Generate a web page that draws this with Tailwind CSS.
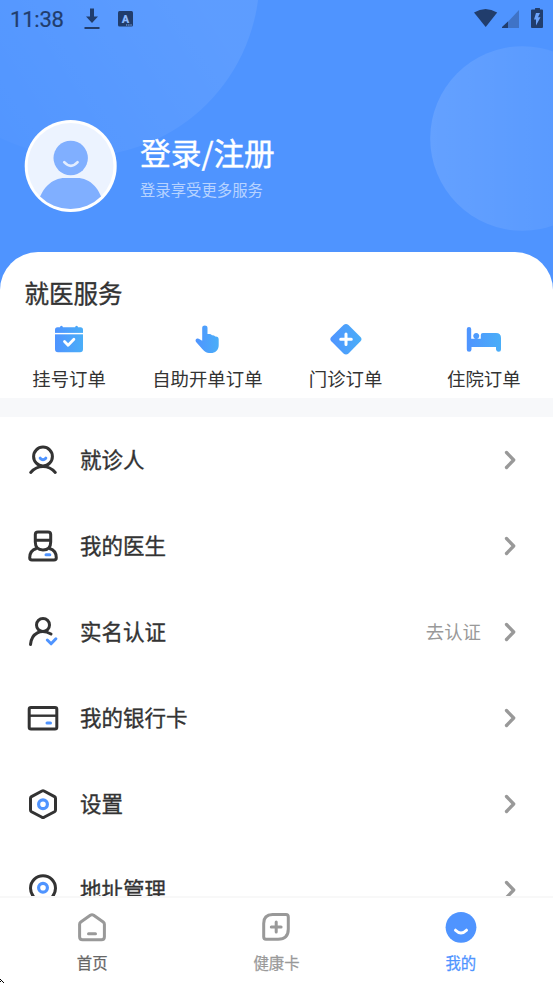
<!DOCTYPE html>
<html lang="zh-CN">
<head>
<meta charset="utf-8">
<title>我的</title>
<script src="https://cdn.jsdelivr.net/npm/@tailwindcss/browser@4"></script>
</head>
<body class="bg-white">
<div class="relative flex h-[984px] w-[553px] flex-col overflow-hidden bg-white font-['Noto_Sans_CJK_SC',sans-serif] text-[#333]">
  <!-- decorative header background -->
  <svg class="absolute left-0 top-0" width="553" height="300" viewBox="0 0 553 300">
    <defs>
      <linearGradient id="c1" gradientUnits="userSpaceOnUse" x1="10" y1="150" x2="210" y2="20"><stop offset="0" stop-color="#fff" stop-opacity=".02"/><stop offset="1" stop-color="#fff" stop-opacity=".08"/></linearGradient>
      <linearGradient id="c2"><stop offset="0" stop-color="#fff" stop-opacity=".12"/><stop offset="1" stop-color="#fff" stop-opacity=".03"/></linearGradient>
      <linearGradient id="g"><stop offset="0" stop-color="#4f94ff"/><stop offset="1" stop-color="#4aaef8"/></linearGradient>
    </defs>
    <rect width="553" height="300" fill="#4f94ff"/>
    <circle cx="80" cy="-23" r="179.5" fill="url(#c1)"/>
    <circle cx="522.500" cy="138.500" r="92.300" fill="url(#c2)"/>
  </svg>

  <header class="relative flex h-[252px] shrink-0 flex-col">
    <div class="flex h-[38px] items-center justify-between pl-[10px] pr-[9px] text-[#213d6c]">
      <div class="flex items-center">
        <span class="w-[74px] pt-[2px] font-[Roboto] text-[22px] leading-[36px] tracking-[-.2px] [-webkit-text-stroke:.2px]">11:38</span>
        <svg width="16" height="22" viewBox="0 0 16 22" fill="currentColor"><path d="M6 .5h4v8h4l-6 6.500L2 8.500h4zM.5 19h15v2H.5z"/></svg>
        <svg class="ml-[18px]" width="15" height="16" viewBox="0 0 15 16"><rect width="15" height="15.500" rx="1.500" fill="currentColor"/><text x="7.500" y="11.500" text-anchor="middle" font-family="Roboto" font-weight="900" font-size="11" fill="#8dbaff">A</text><path d="M8 14h1.300M10.200 14h1.300M12.400 14h1.300" stroke="#8dbaff" stroke-width="1"/></svg>
      </div>
      <svg class="-mt-[2px]" width="70" height="21" viewBox="0 0 70 21" fill="currentColor"><path d="M0 4.500Q11.500-2.500 23.200 4.500L11.700 19z"/><path d="M45 2V20H28z" fill="#3f73c7"/><path d="M34 13.500V20h-6v-1z"/><path d="M61 1.500V.5q0-.5.5-.5h4q.5 0 .5.500v1h2q1 0 1 1V19q0 1-1 1h-10q-1 0-1-1V2.500q0-1 1-1z"/><path d="M62 5h4l-2 4.200h2.500L62 17.500v-6h-2z" fill="#6ba3fb"/></svg>
    </div>
    <div class="flex pl-[24px] pt-[82px]">
      <svg width="93" height="92" viewBox="0 0 93 92">
        <defs><clipPath id="av"><circle cx="46.500" cy="46" r="43"/></clipPath></defs>
        <circle cx="46.700" cy="46" r="46" fill="#fff"/>
        <circle cx="46.500" cy="46" r="43" fill="#ecf3ff"/>
        <g clip-path="url(#av)" fill="#80afff"><circle cx="46.700" cy="38" r="17.200"/><path d="M12 94C14 70 27 58 41 58h12c14 0 26 12 28 36z"/></g>
        <path d="M40.200 42.200q6.700 7.400 13.400 0" fill="none" stroke="#e3edff" stroke-width="2.600" stroke-linecap="round"/>
      </svg>
      <div class="pl-[23px] pt-[10px] text-white">
        <div class="text-[30.7px] leading-[44px] [-webkit-text-stroke:.4px]">登录/注册</div>
        <div class="mt-[4px] text-[15.36px] leading-[22px] text-white/60">登录享受更多服务</div>
      </div>
    </div>
  </header>

  <section class="relative h-[146px] shrink-0 rounded-t-[38px] bg-white pt-[23px]">
    <h2 class="pl-[24.500px] text-[24.5px] leading-[36px] [-webkit-text-stroke:.35px]">就医服务</h2>
    <div class="grid grid-cols-4 pt-[10px] text-[18.4px] leading-[26px]">
      <div class="flex flex-col items-center whitespace-nowrap"><svg class="mb-[8px]" width="36" height="36" viewBox="0 0 36 36"><g transform="translate(0 -.3)" fill="url(#g)"><path d="M4 12.500V9q0-2.500 2.500-2.500H9Q9 5 10.400 5t1.500 1.500h12.200Q24.200 5 25.600 5T27 6.500h2.500Q32 6.500 32 9v3.500zM4 13.500h28v15q0 3-3 3H7q-3 0-3-3z"/></g><path d="M4 12.500h28" stroke="#fff" stroke-width="1.200"/><path d="m13.500 20.500 3.600 3.700 5.800-5.900" fill="none" stroke="#fff" stroke-width="2.800" stroke-linecap="round" stroke-linejoin="round"/></svg><span>挂号订单</span></div>
      <div class="flex flex-col items-center whitespace-nowrap"><svg class="mb-[8px]" width="36" height="36" viewBox="0 0 36 36"><path fill="url(#g)" d="M13.200 6.800c0-3 5.300-3 5.300 0v6.300l1.500 0q1.700-.2 3 1.200 2-.2 3.300 1.300 3.400-.2 3.400 3v5.600c0 5-3.700 7.800-7.800 7.800-5.400 0-7.300-2.600-9.500-5.100l-5.300-6c-1.700-2.300 1.200-4.500 3.500-2.700l2.600 1.500z"/></svg><span>自助开单订单</span></div>
      <div class="flex flex-col items-center whitespace-nowrap"><svg class="mb-[8px]" width="36" height="36" viewBox="0 0 36 36"><path fill="url(#g)" d="M15.500 4q2.500-2 5 0L32.500 16q2 2.200 0 4.300L20.500 32.500q-2.500 2-5 0L3.300 20.300q-2-2.100 0-4.300z"/><path d="M12.700 18.300h10.600M18 13v10.600" stroke="#fff" stroke-width="3" stroke-linecap="round"/></svg><span>门诊订单</span></div>
      <div class="flex flex-col items-center whitespace-nowrap"><svg class="mb-[8px]" width="36" height="36" viewBox="0 0 36 36"><path fill="url(#g)" d="M.8 8q0-2 2.200-2t2.200 2v9.800h4.300a3 3 0 1 1 1.500 0h3.800V14q0-2 2-2H30q5 0 5 5v11.500q0 2.200-2.300 2.200T30 28.500V26H5.500v2.500q0 2.200-2.400 2.200T.8 28.500z"/></svg><span>住院订单</span></div>
    </div>
  </section>
  <div class="relative h-[19px] shrink-0 bg-[#f7f8fa]"></div>

  <main class="relative h-[479px] shrink-0 overflow-hidden text-[21.5px] leading-[32px]">
    <div class="flex h-[86px] items-center pl-[26px] pr-[36px]">
      <svg width="34" height="34" viewBox="0 0 34 34" fill="none" stroke="#333" stroke-width="3" stroke-linecap="round"><circle cx="17" cy="13.500" r="9.400"/><path d="M4.700 29.500Q10 23.500 17 23.500t12.300 6"/><path d="M14.200 15.200q2.800 3 5.600 0" stroke="#4f94ff"/></svg>
      <span class="flex-1 pb-[2px] pl-[20px] [-webkit-text-stroke:.35px]">就诊人</span>
      <svg width="14" height="20" viewBox="0 0 14 20" fill="none" stroke="#999" stroke-width="3.300" stroke-linecap="round" stroke-linejoin="round"><path d="m3.500 2.500 7.200 7.500-7.200 7.500"/></svg>
    </div>
    <div class="flex h-[86px] items-center pl-[26px] pr-[36px]">
      <svg width="34" height="34" viewBox="0 0 34 34" fill="none" stroke="#333" stroke-width="3" stroke-linejoin="round"><path d="M9.300 11V5.500Q9.300 3 12 3h10q2.700 0 2.700 2.500V13q0 8-7.700 8t-7.700-8zM9.300 11.200h15.400M10.500 19.500q-6.800 2-6.800 9.200 0 2.300 2.300 2.300h22q2.300 0 2.300-2.300 0-7.200-6.800-9.200"/><path d="M20 25.700h3.800" stroke="#4f94ff" stroke-linecap="round"/></svg>
      <span class="flex-1 pb-[2px] pl-[20px] [-webkit-text-stroke:.35px]">我的医生</span>
      <svg width="14" height="20" viewBox="0 0 14 20" fill="none" stroke="#999" stroke-width="3.300" stroke-linecap="round" stroke-linejoin="round"><path d="m3.500 2.500 7.200 7.500-7.200 7.500"/></svg>
    </div>
    <div class="flex h-[86px] items-center pl-[26px] pr-[36px]">
      <svg width="34" height="34" viewBox="0 0 34 34" fill="none" stroke="#333" stroke-width="3" stroke-linecap="round" stroke-linejoin="round"><circle cx="17" cy="10" r="6.500"/><path d="M4.500 29.500C5.500 18 15 13.500 25 19"/><path d="m21.300 25 3.800 3.800 4.800-5" stroke="#4f94ff"/></svg>
      <span class="flex-1 pb-[2px] pl-[20px] [-webkit-text-stroke:.35px]">实名认证</span>
      <span class="pb-[2px] pr-[22px] text-[18.4px] text-[#999]">去认证</span>
      <svg width="14" height="20" viewBox="0 0 14 20" fill="none" stroke="#999" stroke-width="3.300" stroke-linecap="round" stroke-linejoin="round"><path d="m3.500 2.500 7.200 7.500-7.200 7.500"/></svg>
    </div>
    <div class="flex h-[86px] items-center pl-[26px] pr-[36px]">
      <svg width="34" height="34" viewBox="0 0 34 34" fill="none" stroke="#333" stroke-width="3"><rect x="3.200" y="6.500" width="27.600" height="21.500" rx="1.800"/><path d="M3 14.700h28" stroke-width="2.400"/><path d="M21 22h3.500" stroke="#4f94ff" stroke-linecap="round"/></svg>
      <span class="flex-1 pb-[2px] pl-[20px] [-webkit-text-stroke:.35px]">我的银行卡</span>
      <svg width="14" height="20" viewBox="0 0 14 20" fill="none" stroke="#999" stroke-width="3.300" stroke-linecap="round" stroke-linejoin="round"><path d="m3.500 2.500 7.200 7.500-7.200 7.500"/></svg>
    </div>
    <div class="flex h-[86px] items-center pl-[26px] pr-[36px]">
      <svg width="34" height="34" viewBox="0 0 34 34" fill="none" stroke="#333" stroke-width="3" stroke-linejoin="round"><path d="m16 4q1-.5 2 0L28.500 9.600q1 .6 1 1.700v11.700q0 1.100-1 1.700L18 30.300q-1 .5-2 0L5.500 24.700q-1-.6-1-1.700V11.300q0-1.100 1-1.700z"/><circle cx="17" cy="17.200" r="4.400" stroke="#4f94ff" stroke-width="3.200"/></svg>
      <span class="flex-1 pb-[2px] pl-[20px] [-webkit-text-stroke:.35px]">设置</span>
      <svg width="14" height="20" viewBox="0 0 14 20" fill="none" stroke="#999" stroke-width="3.300" stroke-linecap="round" stroke-linejoin="round"><path d="m3.500 2.500 7.200 7.500-7.200 7.500"/></svg>
    </div>
    <div class="flex h-[86px] items-center pl-[26px] pr-[36px]">
      <svg width="34" height="34" viewBox="0 0 34 34" fill="none" stroke="#333" stroke-width="3" stroke-linejoin="round"><path d="M17 32C10 27 4.500 22.500 4.500 15.200a12.500 12.500 0 0 1 25 0C29.500 22.500 24 27 17 32z"/><circle cx="17" cy="14.700" r="4.400" stroke="#4f94ff" stroke-width="3.200"/></svg>
      <span class="flex-1 pb-[3px] pl-[20px] [-webkit-text-stroke:.35px]">地址管理</span>
      <svg width="14" height="20" viewBox="0 0 14 20" fill="none" stroke="#999" stroke-width="3.300" stroke-linecap="round" stroke-linejoin="round"><path d="m3.500 2.500 7.200 7.500-7.200 7.500"/></svg>
    </div>
  </main>

  <nav class="relative grid h-[88px] shrink-0 grid-cols-3 border-t-2 border-[#f8f8f8] bg-white pt-[12px] text-[15.36px] leading-[22px] text-[#999] [-webkit-text-stroke:.25px]">
    <div class="flex flex-col items-center gap-[7px]"><svg width="34" height="34" viewBox="0 0 34 34" fill="none" stroke="#999" stroke-width="3" stroke-linecap="round" stroke-linejoin="round"><path d="M15.300 5.200q1.700-1 3.400 0l9.500 6.800q1.200.9 1.200 2.300v12.400q0 3-3 3H7.600q-3 0-3-3V14.300q0-1.400 1.200-2.300z"/><path d="M13.500 23.700h7"/></svg><span class="text-[#666]">首页</span></div>
    <div class="flex flex-col items-center gap-[7px]"><svg width="34" height="34" viewBox="0 0 34 34" fill="none" stroke="#999" stroke-width="3" stroke-linecap="round"><path d="M13.500 4.500h13.500q2.300 0 2.300 2.500V19q0 10.200-10.200 10.200H7q-2.300 0-2.300-2.500V13.500q0-9 8.800-9z"/><path d="M12.300 17h9.800M17.200 12v10"/></svg><span>健康卡</span></div>
    <div class="flex flex-col items-center gap-[7px]"><svg width="34" height="34" viewBox="0 0 34 34"><circle cx="17" cy="17.300" r="15.400" fill="#4f94ff"/><path d="M11.500 20.200q5.500 5.500 11 0" fill="none" stroke="#fff" stroke-width="3" stroke-linecap="round"/></svg><span class="text-[#4f94ff]">我的</span></div>
  </nav>
  <svg class="absolute bottom-0 left-0" width="5" height="5" viewBox="0 0 5 5" shape-rendering="crispEdges"><path d="M0 0h1v1H0zM1 1h1v1H1zM2 2h1v1H2zM3 3h1v1H3zM0 2h1v1H0z" fill="#000"/></svg>
</div>
</body>
</html>
